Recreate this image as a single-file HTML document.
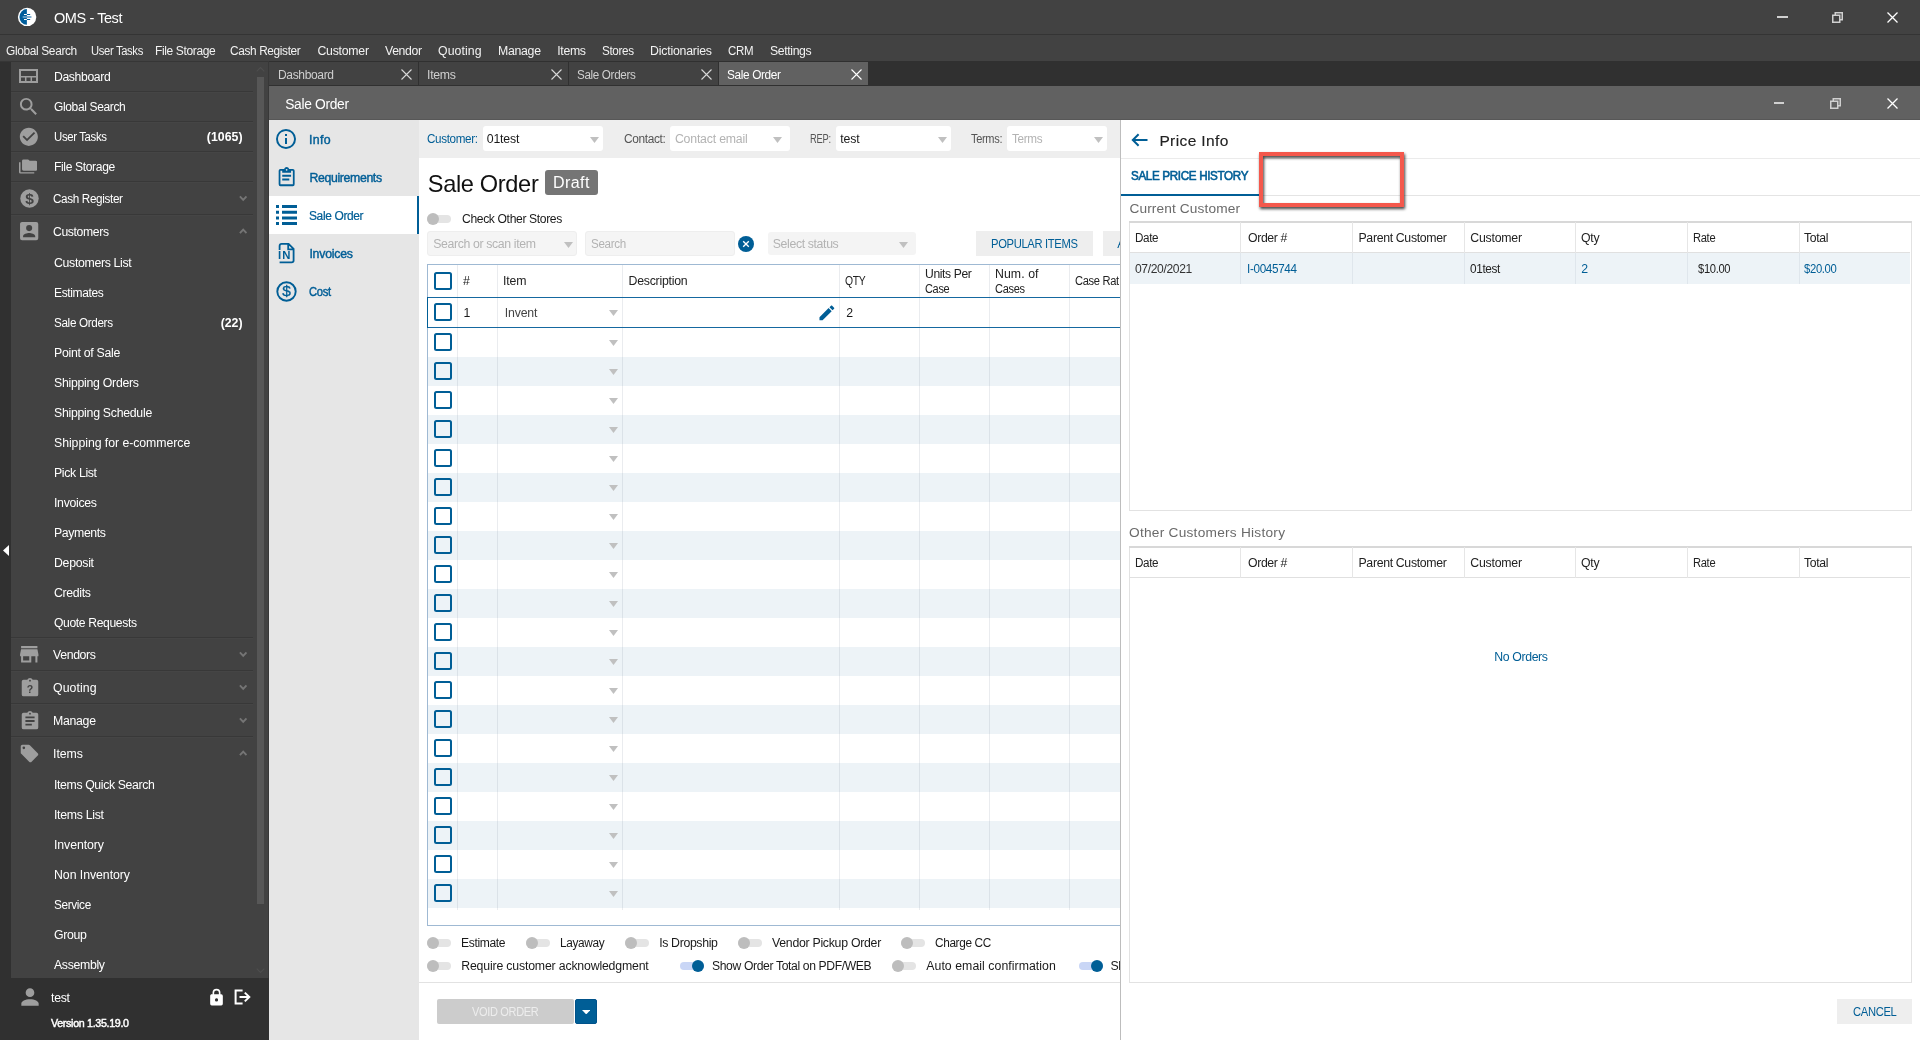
<!DOCTYPE html>
<html lang="en"><head><meta charset="utf-8"><title>OMS - Test</title>
<style>
html,body{margin:0;padding:0;background:#fff;}
body{width:1920px;height:1040px;overflow:hidden;font-family:"Liberation Sans",sans-serif;}
#app{position:relative;width:1920px;height:1040px;overflow:hidden;background:#fff;will-change:transform;}
#app div,#app svg,#app span.t{position:absolute;}
#app div{box-sizing:border-box;}
span.t{white-space:nowrap;line-height:20px;transform-origin:0 50%;}
</style></head>
<body>
<div id="app">
<div style="left:0px;top:0px;width:1920px;height:35px;background:#424242;"></div>
<div style="left:0px;top:34px;width:1920px;height:1px;background:#343434;"></div>
<svg style="left:17px;top:7px;" width="20" height="20" viewBox="0 0 20 20"><circle cx="10.1" cy="9.9" r="9.2" fill="#fff"/>
<path d="M9.85 2.1A7.4 7.8 0 0 0 9.85 17.7Z" fill="#005E9C"/>
<path d="M9.85 6.95h3.3v1.1H9.85zM9.85 11.95h3.3v1.1H9.85z" fill="#005E9C"/>
<path d="M9.85 9.35h4.6v1.3H9.85z" fill="#3f86b8"/>
<path d="M7 6.95h2.85v1.1H7zM7 11.95h2.85v1.1H7z" fill="#fff"/>
<path d="M5.7 9.35h4.15v1.3H5.7z" fill="#8fbbd8"/></svg>
<span class="t" style="left:54px;top:8.00px;font-size:14.6px;color:#fff;letter-spacing:-0.438px;transform:scaleX(0.9960);">OMS - Test</span>
<div style="left:1777px;top:16px;width:10.5px;height:2px;background:#d0d0d0;"></div>
<svg style="left:1832px;top:11.5px;" width="11" height="11" viewBox="0 0 11 11"><path d="M0.75 3.25h7v7h-7z" fill="none" stroke="#d0d0d0" stroke-width="1.5"/><path d="M3.25 3V0.75h7v7H8" fill="none" stroke="#d0d0d0" stroke-width="1.5"/></svg>
<svg style="left:1887px;top:11.5px;" width="11" height="11" viewBox="0 0 11 11"><path d="M0.5 0.5L10.5 10.5M10.5 0.5L0.5 10.5" stroke="#fff" stroke-width="1.3" fill="none"/></svg>
<div style="left:0px;top:35px;width:1920px;height:26px;background:#424242;"></div>
<span class="t" style="left:6.25px;top:40.50px;font-size:12.3px;color:#f2f2f2;letter-spacing:-0.369px;transform:scaleX(0.9693);">Global Search</span>
<span class="t" style="left:90.5px;top:40.50px;font-size:12.3px;color:#f2f2f2;letter-spacing:-0.369px;transform:scaleX(0.9123);">User Tasks</span>
<span class="t" style="left:155.25px;top:40.50px;font-size:12.3px;color:#f2f2f2;letter-spacing:-0.369px;transform:scaleX(0.9758);">File Storage</span>
<span class="t" style="left:230.25px;top:40.50px;font-size:12.3px;color:#f2f2f2;letter-spacing:-0.369px;transform:scaleX(0.9627);">Cash Register</span>
<span class="t" style="left:317.5px;top:40.50px;font-size:12.3px;color:#f2f2f2;letter-spacing:-0.259px;">Customer</span>
<span class="t" style="left:385px;top:40.50px;font-size:12.3px;color:#f2f2f2;letter-spacing:-0.369px;transform:scaleX(0.9962);">Vendor</span>
<span class="t" style="left:438px;top:40.50px;font-size:12.3px;color:#f2f2f2;letter-spacing:0.070px;">Quoting</span>
<span class="t" style="left:498px;top:40.50px;font-size:12.3px;color:#f2f2f2;letter-spacing:-0.291px;">Manage</span>
<span class="t" style="left:557.2px;top:40.50px;font-size:12.3px;color:#f2f2f2;letter-spacing:-0.320px;">Items</span>
<span class="t" style="left:602px;top:40.50px;font-size:12.3px;color:#f2f2f2;letter-spacing:-0.369px;transform:scaleX(0.9495);">Stores</span>
<span class="t" style="left:650.1px;top:40.50px;font-size:12.3px;color:#f2f2f2;letter-spacing:-0.214px;">Dictionaries</span>
<span class="t" style="left:728.1px;top:40.50px;font-size:12.3px;color:#f2f2f2;letter-spacing:-0.369px;transform:scaleX(0.9348);">CRM</span>
<span class="t" style="left:770px;top:40.50px;font-size:12.3px;color:#f2f2f2;letter-spacing:-0.369px;transform:scaleX(0.9963);">Settings</span>
<div style="left:0px;top:61px;width:1920px;height:25px;background:#303030;"></div>
<div style="left:269px;top:62px;width:149px;height:23px;background:#424242;"></div>
<span class="t" style="left:277.5px;top:64.50px;font-size:12.3px;color:#cfcfcf;letter-spacing:-0.369px;transform:scaleX(0.9787);">Dashboard</span>
<svg style="left:401px;top:69px;" width="11" height="11" viewBox="0 0 11 11"><path d="M0.5 0.5L10.5 10.5M10.5 0.5L0.5 10.5" stroke="#d8d8d8" stroke-width="1.1" fill="none"/></svg>
<div style="left:419px;top:62px;width:149px;height:23px;background:#424242;"></div>
<span class="t" style="left:427.1px;top:64.50px;font-size:12.3px;color:#cfcfcf;letter-spacing:-0.320px;">Items</span>
<svg style="left:551px;top:69px;" width="11" height="11" viewBox="0 0 11 11"><path d="M0.5 0.5L10.5 10.5M10.5 0.5L0.5 10.5" stroke="#d8d8d8" stroke-width="1.1" fill="none"/></svg>
<div style="left:569px;top:62px;width:149px;height:23px;background:#424242;"></div>
<span class="t" style="left:577px;top:64.50px;font-size:12.3px;color:#cfcfcf;letter-spacing:-0.369px;transform:scaleX(0.9494);">Sale Orders</span>
<svg style="left:701px;top:69px;" width="11" height="11" viewBox="0 0 11 11"><path d="M0.5 0.5L10.5 10.5M10.5 0.5L0.5 10.5" stroke="#d8d8d8" stroke-width="1.1" fill="none"/></svg>
<div style="left:719px;top:62px;width:149px;height:23px;background:#616161;"></div>
<span class="t" style="left:727px;top:64.50px;font-size:12.3px;color:#fff;letter-spacing:-0.369px;transform:scaleX(0.9617);">Sale Order</span>
<svg style="left:851px;top:69px;" width="11" height="11" viewBox="0 0 11 11"><path d="M0.5 0.5L10.5 10.5M10.5 0.5L0.5 10.5" stroke="#fff" stroke-width="1.1" fill="none"/></svg>
<div style="left:0px;top:61px;width:11px;height:979px;background:#303030;"></div>
<div style="left:11px;top:61px;width:258px;height:917px;background:#424242;"></div>
<div style="left:0px;top:978px;width:269px;height:62px;background:#303030;"></div>
<div style="left:0px;top:61px;width:269px;height:1px;background:#363636;"></div>
<div style="left:268px;top:61px;width:1px;height:917px;background:#383838;"></div>
<svg style="left:3px;top:545px;" width="6" height="11" viewBox="0 0 6 11"><path d="M6 0V11L0 5.5Z" fill="#fff"/></svg>
<div style="left:257px;top:77px;width:7px;height:827px;background:#575757;"></div>
<svg style="left:256px;top:66px;" width="9" height="6" viewBox="0 0 9 6"><path d="M0.7 5.3L4.5 1.5L8.3 5.3" stroke="#4e4e4e" stroke-width="1.2" fill="none"/></svg>
<svg style="left:256px;top:968px;" width="9" height="6" viewBox="0 0 9 6"><path d="M0.7 0.7L4.5 4.5L8.3 0.7" stroke="#4e4e4e" stroke-width="1.2" fill="none"/></svg>
<span class="t" style="left:54px;top:66.50px;font-size:12.3px;color:#fff;letter-spacing:-0.369px;transform:scaleX(0.9918);">Dashboard</span>
<span class="t" style="left:54px;top:96.50px;font-size:12.3px;color:#fff;letter-spacing:-0.369px;transform:scaleX(0.9761);">Global Search</span>
<span class="t" style="left:54px;top:126.50px;font-size:12.3px;color:#fff;letter-spacing:-0.369px;transform:scaleX(0.9254);">User Tasks</span>
<span class="t" style="left:54px;top:156.50px;font-size:12.3px;color:#fff;letter-spacing:-0.369px;transform:scaleX(0.9839);">File Storage</span>
<div style="left:11px;top:91px;width:242px;height:1px;background:#383838;"></div>
<div style="left:11px;top:92px;width:242px;height:1px;background:#454545;"></div>
<div style="left:11px;top:121px;width:242px;height:1px;background:#383838;"></div>
<div style="left:11px;top:122px;width:242px;height:1px;background:#454545;"></div>
<div style="left:11px;top:151px;width:242px;height:1px;background:#383838;"></div>
<div style="left:11px;top:152px;width:242px;height:1px;background:#454545;"></div>
<div style="left:11px;top:181px;width:242px;height:1px;background:#383838;"></div>
<div style="left:11px;top:182px;width:242px;height:1px;background:#454545;"></div>
<div style="left:11px;top:214px;width:242px;height:1px;background:#383838;"></div>
<div style="left:11px;top:215px;width:242px;height:1px;background:#454545;"></div>
<div style="left:11px;top:637px;width:242px;height:1px;background:#383838;"></div>
<div style="left:11px;top:638px;width:242px;height:1px;background:#454545;"></div>
<div style="left:11px;top:670px;width:242px;height:1px;background:#383838;"></div>
<div style="left:11px;top:671px;width:242px;height:1px;background:#454545;"></div>
<div style="left:11px;top:703px;width:242px;height:1px;background:#383838;"></div>
<div style="left:11px;top:704px;width:242px;height:1px;background:#454545;"></div>
<div style="left:11px;top:736px;width:242px;height:1px;background:#383838;"></div>
<div style="left:11px;top:737px;width:242px;height:1px;background:#454545;"></div>
<svg style="left:18.8px;top:69.2px;" width="19" height="14" viewBox="0 0 19 14"><path d="M1 1h17v12H1z" fill="none" stroke="#9e9e9e" stroke-width="2"/><path d="M1 7.8h17M6.7 7.8V13M12.3 7.8V13" fill="none" stroke="#9e9e9e" stroke-width="1.5"/></svg>
<svg style="left:16.7px;top:94.6px;" width="23.3" height="23.3" viewBox="0 0 24 24"><path fill="#9e9e9e" d="M9.5,3A6.5,6.5 0 0,1 16,9.5C16,11.11 15.41,12.59 14.44,13.73L14.71,14H15.5L20.5,19L19,20.5L14,15.5V14.71L13.73,14.44C12.59,15.41 11.11,16 9.5,16A6.5,6.5 0 0,1 3,9.5A6.5,6.5 0 0,1 9.5,3M9.5,5C7,5 5,7 5,9.5C5,12 7,14 9.5,14C12,14 14,12 14,9.5C14,7 12,5 9.5,5Z"/></svg>
<svg style="left:17.6px;top:125.9px;" width="21.7" height="21.7" viewBox="0 0 24 24"><path fill="#9e9e9e" d="M12 2C6.5 2 2 6.5 2 12S6.5 22 12 22 22 17.5 22 12 17.5 2 12 2M10 17L5 12L6.41 10.59L10 14.17L17.59 6.58L19 8L10 17Z"/></svg>
<svg style="left:19.2px;top:158.2px;" width="18.3" height="17" viewBox="0 0 24 24" preserveAspectRatio="none"><path fill="#9e9e9e" d="M22,4H14L12,2H6A2,2 0 0,0 4,4V16A2,2 0 0,0 6,18H22A2,2 0 0,0 24,16V6A2,2 0 0,0 22,4M2,6H0V11H0V20A2,2 0 0,0 2,22H20V20H2V6Z"/></svg>
<span class="t" style="left:53px;top:188.50px;font-size:12.3px;color:#fff;letter-spacing:-0.369px;transform:scaleX(0.9525);">Cash Register</span>
<svg style="left:238.6px;top:195.1px;" width="8.4" height="6.5" viewBox="0 0 8.4 6.5"><path d="M0.9 1.4L4.2 4.8L7.5 1.4" stroke="#757575" stroke-width="1.9" fill="none"/></svg>
<span class="t" style="left:53px;top:221.50px;font-size:12.3px;color:#fff;letter-spacing:-0.369px;transform:scaleX(0.9911);">Customers</span>
<svg style="left:238.6px;top:228.1px;" width="8.4" height="6.5" viewBox="0 0 8.4 6.5"><path d="M0.9 5.1L4.2 1.7L7.5 5.1" stroke="#757575" stroke-width="1.9" fill="none"/></svg>
<span class="t" style="left:53px;top:644.50px;font-size:12.3px;color:#fff;letter-spacing:-0.354px;">Vendors</span>
<svg style="left:238.6px;top:651.1px;" width="8.4" height="6.5" viewBox="0 0 8.4 6.5"><path d="M0.9 1.4L4.2 4.8L7.5 1.4" stroke="#757575" stroke-width="1.9" fill="none"/></svg>
<span class="t" style="left:53px;top:677.50px;font-size:12.3px;color:#fff;letter-spacing:0.070px;">Quoting</span>
<svg style="left:238.6px;top:684.1px;" width="8.4" height="6.5" viewBox="0 0 8.4 6.5"><path d="M0.9 1.4L4.2 4.8L7.5 1.4" stroke="#757575" stroke-width="1.9" fill="none"/></svg>
<span class="t" style="left:53px;top:710.50px;font-size:12.3px;color:#fff;letter-spacing:-0.291px;">Manage</span>
<svg style="left:238.6px;top:717.1px;" width="8.4" height="6.5" viewBox="0 0 8.4 6.5"><path d="M0.9 1.4L4.2 4.8L7.5 1.4" stroke="#757575" stroke-width="1.9" fill="none"/></svg>
<span class="t" style="left:53px;top:743.50px;font-size:12.3px;color:#fff;letter-spacing:-0.020px;">Items</span>
<svg style="left:238.6px;top:750.1px;" width="8.4" height="6.5" viewBox="0 0 8.4 6.5"><path d="M0.9 5.1L4.2 1.7L7.5 5.1" stroke="#757575" stroke-width="1.9" fill="none"/></svg>
<svg style="left:20px;top:189px;" width="19" height="19" viewBox="0 0 19 19"><circle cx="9.5" cy="9.5" r="9.2" fill="#9e9e9e"/><text x="9.5" y="15.1" text-anchor="middle" font-family="Liberation Sans,sans-serif" font-size="15.5" font-weight="700" fill="#424242">$</text></svg>
<svg style="left:17.2px;top:219.1px;" width="24.3" height="24.3" viewBox="0 0 24 24"><path fill="#9e9e9e" d="M6,17C6,15 10,13.9 12,13.9C14,13.9 18,15 18,17V18H6M15,9A3,3 0 0,1 12,12A3,3 0 0,1 9,9A3,3 0 0,1 12,6A3,3 0 0,1 15,9M3,5V19A2,2 0 0,0 5,21H19A2,2 0 0,0 21,19V5A2,2 0 0,0 19,3H5C3.89,3 3,3.9 3,5Z"/></svg>
<svg style="left:17.4px;top:641.8px;" width="24.5" height="24.5" viewBox="0 0 24 24"><path fill="#9e9e9e" d="M12,18H6V14H12M21,14V12L20,7H4L3,12V14H4V20H14V14H18V20H20V14M20,4H4V6H20V4Z"/></svg>
<svg style="left:18.6px;top:676.5px;" width="22" height="22" viewBox="0 0 24 24"><path fill="#9e9e9e" d="M12,3A1,1 0 0,1 13,4A1,1 0 0,1 12,5A1,1 0 0,1 11,4A1,1 0 0,1 12,3M19,3H14.82C14.4,1.84 13.3,1 12,1C10.7,1 9.6,1.84 9.18,3H5A2,2 0 0,0 3,5V19A2,2 0 0,0 5,21H19A2,2 0 0,0 21,19V5A2,2 0 0,0 19,3Z"/><text x="12" y="17" text-anchor="middle" font-family="Liberation Sans,sans-serif" font-size="11.5" font-weight="700" fill="#424242">?</text></svg>
<svg style="left:18.6px;top:709.5px;" width="22" height="22" viewBox="0 0 24 24"><path fill="#9e9e9e" d="M17,9H7V7H17M17,13H7V11H17M14,17H7V15H14M12,3A1,1 0 0,1 13,4A1,1 0 0,1 12,5A1,1 0 0,1 11,4A1,1 0 0,1 12,3M19,3H14.82C14.4,1.84 13.3,1 12,1C10.7,1 9.6,1.84 9.18,3H5A2,2 0 0,0 3,5V19A2,2 0 0,0 5,21H19A2,2 0 0,0 21,19V5A2,2 0 0,0 19,3Z"/></svg>
<svg style="left:19px;top:743px;" width="21" height="21" viewBox="0 0 24 24"><path fill="#9e9e9e" d="M5.5,7A1.5,1.5 0 0,1 4,5.5A1.5,1.5 0 0,1 5.5,4A1.5,1.5 0 0,1 7,5.5A1.5,1.5 0 0,1 5.5,7M21.41,11.58L12.41,2.58C12.05,2.22 11.55,2 11,2H4C2.89,2 2,2.89 2,4V11C2,11.55 2.22,12.05 2.59,12.41L11.58,21.41C11.95,21.77 12.45,22 13,22C13.55,22 14.05,21.77 14.41,21.41L21.41,14.41C21.78,14.05 22,13.55 22,13C22,12.44 21.77,11.94 21.41,11.58Z"/></svg>
<span class="t" style="left:54px;top:252.50px;font-size:12.3px;color:#fff;letter-spacing:-0.328px;">Customers List</span>
<span class="t" style="left:54px;top:282.50px;font-size:12.3px;color:#fff;letter-spacing:-0.369px;transform:scaleX(0.9746);">Estimates</span>
<span class="t" style="left:54px;top:312.50px;font-size:12.3px;color:#fff;letter-spacing:-0.369px;transform:scaleX(0.9526);">Sale Orders</span>
<span class="t" style="left:54px;top:342.50px;font-size:12.3px;color:#fff;letter-spacing:-0.290px;">Point of Sale</span>
<span class="t" style="left:54px;top:372.50px;font-size:12.3px;color:#fff;letter-spacing:-0.276px;">Shipping Orders</span>
<span class="t" style="left:54px;top:402.50px;font-size:12.3px;color:#fff;letter-spacing:-0.270px;">Shipping Schedule</span>
<span class="t" style="left:54px;top:432.50px;font-size:12.3px;color:#fff;letter-spacing:-0.051px;">Shipping for e-commerce</span>
<span class="t" style="left:54px;top:462.50px;font-size:12.3px;color:#fff;letter-spacing:-0.350px;">Pick List</span>
<span class="t" style="left:54px;top:492.50px;font-size:12.3px;color:#fff;letter-spacing:-0.304px;">Invoices</span>
<span class="t" style="left:54px;top:522.50px;font-size:12.3px;color:#fff;letter-spacing:-0.369px;transform:scaleX(0.9980);">Payments</span>
<span class="t" style="left:54px;top:552.50px;font-size:12.3px;color:#fff;letter-spacing:-0.284px;">Deposit</span>
<span class="t" style="left:54px;top:582.50px;font-size:12.3px;color:#fff;letter-spacing:-0.326px;">Credits</span>
<span class="t" style="left:54px;top:612.50px;font-size:12.3px;color:#fff;letter-spacing:-0.369px;transform:scaleX(0.9872);">Quote Requests</span>
<span class="t" style="left:54px;top:774.50px;font-size:12.3px;color:#fff;letter-spacing:-0.369px;transform:scaleX(0.9973);">Items Quick Search</span>
<span class="t" style="left:54px;top:804.50px;font-size:12.3px;color:#fff;letter-spacing:-0.292px;">Items List</span>
<span class="t" style="left:54px;top:834.50px;font-size:12.3px;color:#fff;letter-spacing:-0.074px;">Inventory</span>
<span class="t" style="left:54px;top:864.50px;font-size:12.3px;color:#fff;letter-spacing:-0.047px;">Non Inventory</span>
<span class="t" style="left:54px;top:894.50px;font-size:12.3px;color:#fff;letter-spacing:-0.369px;transform:scaleX(0.9600);">Service</span>
<span class="t" style="left:54px;top:924.50px;font-size:12.3px;color:#fff;letter-spacing:-0.359px;">Group</span>
<span class="t" style="left:54px;top:954.50px;font-size:12.3px;color:#fff;letter-spacing:-0.330px;">Assembly</span>
<span class="t" style="left:206.75px;top:126.50px;font-size:12.3px;color:#fff;font-weight:700;letter-spacing:0.041px;">(1065)</span>
<span class="t" style="left:220.75px;top:312.50px;font-size:12.3px;color:#fff;font-weight:700;letter-spacing:-0.042px;">(22)</span>
<svg style="left:17px;top:984px;" width="26" height="26" viewBox="0 0 24 24"><path fill="#9e9e9e" d="M12,4A4,4 0 0,1 16,8A4,4 0 0,1 12,12A4,4 0 0,1 8,8A4,4 0 0,1 12,4M12,14C16.42,14 20,15.79 20,18V20H4V18C4,15.79 7.58,14 12,14Z"/></svg>
<span class="t" style="left:51px;top:988.40px;font-size:12.3px;color:#fff;letter-spacing:-0.276px;">test</span>
<span class="t" style="left:51px;top:1013.30px;font-size:10.8px;color:#fff;letter-spacing:-0.324px;transform:scaleX(0.9891);-webkit-text-stroke:0.45px #fff;">Version 1.35.19.0</span>
<svg style="left:206.5px;top:988px;" width="19" height="19" viewBox="0 0 24 24"><path fill="#fff" d="M12,17A2,2 0 0,0 14,15C14,13.89 13.1,13 12,13A2,2 0 0,0 10,15A2,2 0 0,0 12,17M18,8A2,2 0 0,1 20,10V20A2,2 0 0,1 18,22H6A2,2 0 0,1 4,20V10C4,8.89 4.9,8 6,8H7V6A5,5 0 0,1 12,1A5,5 0 0,1 17,6V8H18M12,3A3,3 0 0,0 9,6V8H15V6A3,3 0 0,0 12,3Z"/></svg>
<svg style="left:233.5px;top:989px;" width="17" height="16" viewBox="0 0 17 16"><path d="M8.6 1.6H1.6V14.4H8.6" stroke="#fff" stroke-width="2" fill="none"/><path d="M5.5 8H15M10.8 3.6L15.3 8L10.8 12.4" stroke="#fff" stroke-width="2" fill="none"/></svg>
<div style="left:269px;top:86px;width:1651px;height:34px;background:#616161;"></div>
<div style="left:269px;top:119px;width:1651px;height:1px;background:#575757;"></div>
<span class="t" style="left:285.25px;top:94.80px;font-size:13.8px;color:#fff;letter-spacing:-0.330px;">Sale Order</span>
<div style="left:1773.5px;top:102px;width:10.5px;height:2px;background:#d0d0d0;"></div>
<svg style="left:1830px;top:97.5px;" width="11" height="11" viewBox="0 0 11 11"><path d="M0.75 3.25h7v7h-7z" fill="none" stroke="#d0d0d0" stroke-width="1.5"/><path d="M3.25 3V0.75h7v7H8" fill="none" stroke="#d0d0d0" stroke-width="1.5"/></svg>
<svg style="left:1887px;top:97.5px;" width="11" height="11" viewBox="0 0 11 11"><path d="M0.5 0.5L10.5 10.5M10.5 0.5L0.5 10.5" stroke="#fff" stroke-width="1.3" fill="none"/></svg>
<div style="left:269px;top:120px;width:150px;height:920px;background:#E6E6E6;"></div>
<div style="left:269px;top:196px;width:150px;height:38px;background:#fff;"></div>
<div style="left:417px;top:196px;width:2px;height:38px;background:#005E96;"></div>
<span class="t" style="left:309.4px;top:129.50px;font-size:12.3px;color:#005E96;letter-spacing:0.308px;transform:scaleX(1.0029);-webkit-text-stroke:0.42px #005E96;">Info</span>
<span class="t" style="left:309.4px;top:167.50px;font-size:12.3px;color:#005E96;letter-spacing:-0.351px;-webkit-text-stroke:0.42px #005E96;">Requirements</span>
<span class="t" style="left:309.4px;top:205.50px;font-size:12.3px;color:#005E96;letter-spacing:-0.369px;transform:scaleX(0.9724);-webkit-text-stroke:0.22px #005E96;">Sale Order</span>
<span class="t" style="left:309.4px;top:243.50px;font-size:12.3px;color:#005E96;letter-spacing:-0.218px;-webkit-text-stroke:0.42px #005E96;">Invoices</span>
<span class="t" style="left:309.4px;top:281.50px;font-size:12.3px;color:#005E96;letter-spacing:-0.369px;transform:scaleX(0.9136);-webkit-text-stroke:0.42px #005E96;">Cost</span>
<svg style="left:274px;top:127px;" width="24" height="24" viewBox="0 0 24 24"><path fill="#005E96" d="M11,9H13V7H11M12,20C7.59,20 4,16.41 4,12C4,7.59 7.59,4 12,4C16.41,4 20,7.59 20,12C20,16.41 16.41,20 12,20M12,2A10,10 0 0,0 2,12A10,10 0 0,0 12,22A10,10 0 0,0 22,12A10,10 0 0,0 12,2M11,17H13V11H11V17Z"/></svg>
<svg style="left:275.8px;top:166.3px;" width="21.3" height="23.2" viewBox="0 0 24 24" preserveAspectRatio="none"><path fill="#005E96" d="M19,3H14.82C14.4,1.84 13.3,1 12,1C10.7,1 9.6,1.84 9.18,3H5A2,2 0 0,0 3,5V19A2,2 0 0,0 5,21H19A2,2 0 0,0 21,19V5A2,2 0 0,0 19,3M12,3A1,1 0 0,1 13,4A1,1 0 0,1 12,5A1,1 0 0,1 11,4A1,1 0 0,1 12,3M7,7H17V5H19V19H5V5H7V7M17,11H7V9H17V11M15,15H7V13H15V15Z"/></svg>
<svg style="left:276px;top:205px;" width="21" height="20" viewBox="0 0 21 20"><path d="M0 0h3v3H0zM6 0h15v3H6zM0 5.7h3v3H0zM6 5.7h15v3H6zM0 11.4h3v3H0zM6 11.4h15v3H6zM0 17h3v3H0zM6 17h15v3H6z" fill="#005E96"/></svg>
<svg style="left:277px;top:242px;" width="18" height="22" viewBox="0 0 18 22"><path d="M2.6 7.9V3.9Q2.6 1.9 4.6 1.9H11.6L16.6 6.9V18.5Q16.6 20.4 14.6 20.4H2.6M11.2 2.1V7.3H16.6" fill="none" stroke="#005E96" stroke-width="1.8"/><text x="0.9" y="17.1" font-family="Liberation Sans,sans-serif" font-size="10.2" font-weight="700" letter-spacing="1.2" textLength="14" lengthAdjust="spacingAndGlyphs" fill="#005E96">IN</text></svg>
<svg style="left:276px;top:281px;" width="21" height="21" viewBox="0 0 21 21"><circle cx="10.5" cy="10.5" r="9.2" fill="none" stroke="#005E96" stroke-width="1.9"/><text x="10.5" y="15.4" text-anchor="middle" font-family="Liberation Sans,sans-serif" font-size="15.5" font-weight="400" stroke="#005E96" stroke-width="0.3" fill="#005E96">$</text></svg>
<div style="left:419px;top:120px;width:701px;height:38px;background:#EEEEEE;"></div>
<span class="t" style="left:427.4px;top:129.00px;font-size:12.3px;color:#005E96;letter-spacing:-0.369px;transform:scaleX(0.9485);">Customer:</span>
<div style="left:483px;top:126px;width:120px;height:25px;background:#fff;border-radius:3px;"></div>
<span class="t" style="left:486.8px;top:129.00px;font-size:12.3px;color:#1a1a1a;letter-spacing:-0.200px;">01test</span>
<svg style="left:589.9px;top:136.5px;" width="9" height="6" viewBox="0 0 9 6"><path d="M0 0H9L4.5 6Z" fill="#c0c0c0"/></svg>
<span class="t" style="left:623.5px;top:129.00px;font-size:12.3px;color:#555;letter-spacing:-0.369px;transform:scaleX(0.9673);">Contact:</span>
<div style="left:670px;top:126px;width:120px;height:25px;background:#fff;border-radius:3px;"></div>
<span class="t" style="left:674.9px;top:129.00px;font-size:12.3px;color:#b3b3b3;letter-spacing:-0.191px;">Contact email</span>
<svg style="left:773.1px;top:136.5px;" width="9" height="6" viewBox="0 0 9 6"><path d="M0 0H9L4.5 6Z" fill="#c0c0c0"/></svg>
<span class="t" style="left:810.25px;top:129.00px;font-size:12.3px;color:#555;letter-spacing:-0.369px;transform:scaleX(0.7610);">REP:</span>
<div style="left:836px;top:126px;width:115px;height:25px;background:#fff;border-radius:3px;"></div>
<span class="t" style="left:840.25px;top:129.00px;font-size:12.3px;color:#1a1a1a;letter-spacing:-0.109px;">test</span>
<svg style="left:938.1px;top:136.5px;" width="9" height="6" viewBox="0 0 9 6"><path d="M0 0H9L4.5 6Z" fill="#c0c0c0"/></svg>
<span class="t" style="left:971px;top:129.00px;font-size:12.3px;color:#555;letter-spacing:-0.369px;transform:scaleX(0.8988);">Terms:</span>
<div style="left:1007px;top:126px;width:100px;height:25px;background:#fff;border-radius:3px;"></div>
<span class="t" style="left:1012.2px;top:129.00px;font-size:12.3px;color:#b3b3b3;letter-spacing:-0.369px;transform:scaleX(0.9544);">Terms</span>
<svg style="left:1093.9px;top:136.5px;" width="9" height="6" viewBox="0 0 9 6"><path d="M0 0H9L4.5 6Z" fill="#c0c0c0"/></svg>
<span class="t" style="left:427.75px;top:173.50px;font-size:23.6px;color:#111;letter-spacing:-0.344px;">Sale Order</span>
<div style="left:545px;top:170px;width:53px;height:25px;background:#757575;border-radius:3px;"></div>
<span class="t" style="left:553.4px;top:173.40px;font-size:15.6px;color:#fff;letter-spacing:0.390px;transform:scaleX(1.0295);">Draft</span>
<div style="left:427px;top:214.5px;width:24px;height:8px;background:#e4e4e4;border-radius:4px;"></div>
<div style="left:427px;top:212.5px;width:12px;height:12px;background:#bdbdbd;border-radius:6px;"></div>
<span class="t" style="left:461.5px;top:208.50px;font-size:12.3px;color:#1a1a1a;letter-spacing:-0.369px;transform:scaleX(0.9861);">Check Other Stores</span>
<div style="left:427px;top:231px;width:150px;height:25px;background:#f5f5f5;border-radius:3px;border:1px solid #eeeeee;"></div>
<span class="t" style="left:433.2px;top:233.50px;font-size:12.3px;color:#b3b3b3;letter-spacing:-0.364px;">Search or scan item</span>
<svg style="left:563.5px;top:241.5px;" width="9" height="6" viewBox="0 0 9 6"><path d="M0 0H9L4.5 6Z" fill="#c0c0c0"/></svg>
<div style="left:585px;top:231px;width:150px;height:25px;background:#f5f5f5;border-radius:3px;border:1px solid #eeeeee;"></div>
<span class="t" style="left:590.9px;top:233.50px;font-size:12.3px;color:#b3b3b3;letter-spacing:-0.369px;transform:scaleX(0.9455);">Search</span>
<svg style="left:738px;top:235.8px;" width="16" height="16" viewBox="0 0 16 16"><circle cx="8" cy="8" r="8" fill="#005E96"/><path d="M5.2 5.2L10.8 10.8M10.8 5.2L5.2 10.8" stroke="#fff" stroke-width="1.35" fill="none"/></svg>
<div style="left:768px;top:232px;width:148px;height:23px;background:#f4f4f4;border-radius:3px;"></div>
<span class="t" style="left:772.75px;top:233.50px;font-size:12.3px;color:#b3b3b3;letter-spacing:-0.367px;">Select status</span>
<svg style="left:898.9px;top:241.5px;" width="9" height="6" viewBox="0 0 9 6"><path d="M0 0H9L4.5 6Z" fill="#c0c0c0"/></svg>
<div style="left:976px;top:231px;width:117px;height:25px;background:#eeeeee;"></div>
<span class="t" style="left:991.2px;top:233.50px;font-size:12.4px;color:#005E96;letter-spacing:-0.372px;transform:scaleX(0.9056);">POPULAR ITEMS</span>
<div style="left:1103px;top:231px;width:17px;height:25px;background:#eeeeee;"></div>
<span class="t" style="left:1117.3px;top:233.50px;font-size:12.4px;color:#005E96;">A</span>
<div style="left:427px;top:264px;width:694px;height:662px;background:#fff;border:1px solid #9fb9d3;border-right:none;"></div>
<div style="left:428px;top:356.5px;width:692px;height:29px;background:#edf3f7;"></div>
<div style="left:428px;top:414.5px;width:692px;height:29px;background:#edf3f7;"></div>
<div style="left:428px;top:472.5px;width:692px;height:29px;background:#edf3f7;"></div>
<div style="left:428px;top:530.5px;width:692px;height:29px;background:#edf3f7;"></div>
<div style="left:428px;top:588.5px;width:692px;height:29px;background:#edf3f7;"></div>
<div style="left:428px;top:646.5px;width:692px;height:29px;background:#edf3f7;"></div>
<div style="left:428px;top:704.5px;width:692px;height:29px;background:#edf3f7;"></div>
<div style="left:428px;top:762.5px;width:692px;height:29px;background:#edf3f7;"></div>
<div style="left:428px;top:820.5px;width:692px;height:29px;background:#edf3f7;"></div>
<div style="left:428px;top:878.5px;width:692px;height:29px;background:#edf3f7;"></div>
<div style="left:457px;top:265px;width:1px;height:645px;background:rgba(130,145,160,0.17);"></div>
<div style="left:496.5px;top:265px;width:1px;height:645px;background:rgba(130,145,160,0.17);"></div>
<div style="left:622px;top:265px;width:1px;height:645px;background:rgba(130,145,160,0.17);"></div>
<div style="left:839px;top:265px;width:1px;height:645px;background:rgba(130,145,160,0.17);"></div>
<div style="left:919px;top:265px;width:1px;height:645px;background:rgba(130,145,160,0.17);"></div>
<div style="left:989px;top:265px;width:1px;height:645px;background:rgba(130,145,160,0.17);"></div>
<div style="left:1069px;top:265px;width:1px;height:645px;background:rgba(130,145,160,0.17);"></div>
<div style="left:428px;top:297px;width:692px;height:1.2px;background:#1568a0;"></div>
<div style="left:428px;top:326.8px;width:692px;height:1.2px;background:#1568a0;"></div>
<div style="left:427px;top:297px;width:1px;height:31px;background:#005E96;"></div>
<div style="left:434px;top:272px;width:18px;height:18px;background:transparent;border:2px solid #005E96;border-radius:2.5px;"></div>
<div style="left:434px;top:303px;width:18px;height:18px;background:transparent;border:2px solid #005E96;border-radius:2.5px;"></div>
<div style="left:434px;top:333px;width:18px;height:18px;background:transparent;border:2px solid #005E96;border-radius:2.5px;"></div>
<svg style="left:608.5px;top:340.0px;" width="9" height="6" viewBox="0 0 9 6"><path d="M0 0H9L4.5 6Z" fill="#c0c0c0"/></svg>
<div style="left:434px;top:362px;width:18px;height:18px;background:transparent;border:2px solid #005E96;border-radius:2.5px;"></div>
<svg style="left:608.5px;top:369.0px;" width="9" height="6" viewBox="0 0 9 6"><path d="M0 0H9L4.5 6Z" fill="#c0c0c0"/></svg>
<div style="left:434px;top:391px;width:18px;height:18px;background:transparent;border:2px solid #005E96;border-radius:2.5px;"></div>
<svg style="left:608.5px;top:398.0px;" width="9" height="6" viewBox="0 0 9 6"><path d="M0 0H9L4.5 6Z" fill="#c0c0c0"/></svg>
<div style="left:434px;top:420px;width:18px;height:18px;background:transparent;border:2px solid #005E96;border-radius:2.5px;"></div>
<svg style="left:608.5px;top:427.0px;" width="9" height="6" viewBox="0 0 9 6"><path d="M0 0H9L4.5 6Z" fill="#c0c0c0"/></svg>
<div style="left:434px;top:449px;width:18px;height:18px;background:transparent;border:2px solid #005E96;border-radius:2.5px;"></div>
<svg style="left:608.5px;top:456.0px;" width="9" height="6" viewBox="0 0 9 6"><path d="M0 0H9L4.5 6Z" fill="#c0c0c0"/></svg>
<div style="left:434px;top:478px;width:18px;height:18px;background:transparent;border:2px solid #005E96;border-radius:2.5px;"></div>
<svg style="left:608.5px;top:485.0px;" width="9" height="6" viewBox="0 0 9 6"><path d="M0 0H9L4.5 6Z" fill="#c0c0c0"/></svg>
<div style="left:434px;top:507px;width:18px;height:18px;background:transparent;border:2px solid #005E96;border-radius:2.5px;"></div>
<svg style="left:608.5px;top:514.0px;" width="9" height="6" viewBox="0 0 9 6"><path d="M0 0H9L4.5 6Z" fill="#c0c0c0"/></svg>
<div style="left:434px;top:536px;width:18px;height:18px;background:transparent;border:2px solid #005E96;border-radius:2.5px;"></div>
<svg style="left:608.5px;top:543.0px;" width="9" height="6" viewBox="0 0 9 6"><path d="M0 0H9L4.5 6Z" fill="#c0c0c0"/></svg>
<div style="left:434px;top:565px;width:18px;height:18px;background:transparent;border:2px solid #005E96;border-radius:2.5px;"></div>
<svg style="left:608.5px;top:572.0px;" width="9" height="6" viewBox="0 0 9 6"><path d="M0 0H9L4.5 6Z" fill="#c0c0c0"/></svg>
<div style="left:434px;top:594px;width:18px;height:18px;background:transparent;border:2px solid #005E96;border-radius:2.5px;"></div>
<svg style="left:608.5px;top:601.0px;" width="9" height="6" viewBox="0 0 9 6"><path d="M0 0H9L4.5 6Z" fill="#c0c0c0"/></svg>
<div style="left:434px;top:623px;width:18px;height:18px;background:transparent;border:2px solid #005E96;border-radius:2.5px;"></div>
<svg style="left:608.5px;top:630.0px;" width="9" height="6" viewBox="0 0 9 6"><path d="M0 0H9L4.5 6Z" fill="#c0c0c0"/></svg>
<div style="left:434px;top:652px;width:18px;height:18px;background:transparent;border:2px solid #005E96;border-radius:2.5px;"></div>
<svg style="left:608.5px;top:659.0px;" width="9" height="6" viewBox="0 0 9 6"><path d="M0 0H9L4.5 6Z" fill="#c0c0c0"/></svg>
<div style="left:434px;top:681px;width:18px;height:18px;background:transparent;border:2px solid #005E96;border-radius:2.5px;"></div>
<svg style="left:608.5px;top:688.0px;" width="9" height="6" viewBox="0 0 9 6"><path d="M0 0H9L4.5 6Z" fill="#c0c0c0"/></svg>
<div style="left:434px;top:710px;width:18px;height:18px;background:transparent;border:2px solid #005E96;border-radius:2.5px;"></div>
<svg style="left:608.5px;top:717.0px;" width="9" height="6" viewBox="0 0 9 6"><path d="M0 0H9L4.5 6Z" fill="#c0c0c0"/></svg>
<div style="left:434px;top:739px;width:18px;height:18px;background:transparent;border:2px solid #005E96;border-radius:2.5px;"></div>
<svg style="left:608.5px;top:746.0px;" width="9" height="6" viewBox="0 0 9 6"><path d="M0 0H9L4.5 6Z" fill="#c0c0c0"/></svg>
<div style="left:434px;top:768px;width:18px;height:18px;background:transparent;border:2px solid #005E96;border-radius:2.5px;"></div>
<svg style="left:608.5px;top:775.0px;" width="9" height="6" viewBox="0 0 9 6"><path d="M0 0H9L4.5 6Z" fill="#c0c0c0"/></svg>
<div style="left:434px;top:797px;width:18px;height:18px;background:transparent;border:2px solid #005E96;border-radius:2.5px;"></div>
<svg style="left:608.5px;top:804.0px;" width="9" height="6" viewBox="0 0 9 6"><path d="M0 0H9L4.5 6Z" fill="#c0c0c0"/></svg>
<div style="left:434px;top:826px;width:18px;height:18px;background:transparent;border:2px solid #005E96;border-radius:2.5px;"></div>
<svg style="left:608.5px;top:833.0px;" width="9" height="6" viewBox="0 0 9 6"><path d="M0 0H9L4.5 6Z" fill="#c0c0c0"/></svg>
<div style="left:434px;top:855px;width:18px;height:18px;background:transparent;border:2px solid #005E96;border-radius:2.5px;"></div>
<svg style="left:608.5px;top:862.0px;" width="9" height="6" viewBox="0 0 9 6"><path d="M0 0H9L4.5 6Z" fill="#c0c0c0"/></svg>
<div style="left:434px;top:884px;width:18px;height:18px;background:transparent;border:2px solid #005E96;border-radius:2.5px;"></div>
<svg style="left:608.5px;top:891.0px;" width="9" height="6" viewBox="0 0 9 6"><path d="M0 0H9L4.5 6Z" fill="#c0c0c0"/></svg>
<svg style="left:608.5px;top:310.0px;" width="9" height="6" viewBox="0 0 9 6"><path d="M0 0H9L4.5 6Z" fill="#c0c0c0"/></svg>
<span class="t" style="left:463.1px;top:271.00px;font-size:12.3px;color:#222;">#</span>
<span class="t" style="left:503px;top:271.00px;font-size:12.3px;color:#222;letter-spacing:-0.141px;">Item</span>
<span class="t" style="left:628.5px;top:271.00px;font-size:12.3px;color:#222;letter-spacing:-0.242px;">Description</span>
<span class="t" style="left:845px;top:271.00px;font-size:12.3px;color:#222;letter-spacing:-0.369px;transform:scaleX(0.8434);">QTY</span>
<span class="t" style="left:925.3px;top:263.50px;font-size:12.3px;color:#222;letter-spacing:-0.369px;transform:scaleX(0.9848);">Units Per</span>
<span class="t" style="left:925.3px;top:278.50px;font-size:12.3px;color:#222;letter-spacing:-0.369px;transform:scaleX(0.8945);">Case</span>
<span class="t" style="left:995px;top:263.50px;font-size:12.3px;color:#222;letter-spacing:0.073px;">Num. of</span>
<span class="t" style="left:995px;top:278.50px;font-size:12.3px;color:#222;letter-spacing:-0.369px;transform:scaleX(0.8987);">Cases</span>
<div style="left:1069px;top:265px;width:50.3px;height:32px;overflow:hidden;">
<span class="t" style="left:6px;top:6.00px;font-size:12.3px;color:#222;letter-spacing:-0.369px;transform:scaleX(0.9065);">Case Rate</span>
</div>
<span class="t" style="left:463.5px;top:302.60px;font-size:12.3px;color:#1a1a1a;">1</span>
<span class="t" style="left:504.75px;top:302.60px;font-size:12.3px;color:#444;letter-spacing:-0.170px;">Invent</span>
<span class="t" style="left:846.2px;top:303.00px;font-size:12.3px;color:#1a1a1a;">2</span>
<svg style="left:816.6px;top:302.8px;" width="19.8" height="19.8" viewBox="0 0 24 24"><path fill="#005E96" d="M20.71,7.04C21.1,6.65 21.1,6 20.71,5.63L18.37,3.29C18,2.9 17.35,2.9 16.96,3.29L15.12,5.12L18.87,8.87M3,17.25V21H6.75L17.81,9.93L14.06,6.18L3,17.25Z"/></svg>
<div style="left:427px;top:938.5px;width:24px;height:8px;background:#e4e4e4;border-radius:4px;"></div>
<div style="left:427px;top:936.5px;width:12px;height:12px;background:#bdbdbd;border-radius:6px;"></div>
<span class="t" style="left:461.25px;top:932.50px;font-size:12.3px;color:#1a1a1a;letter-spacing:-0.369px;transform:scaleX(0.9843);">Estimate</span>
<div style="left:526px;top:938.5px;width:24px;height:8px;background:#e4e4e4;border-radius:4px;"></div>
<div style="left:526px;top:936.5px;width:12px;height:12px;background:#bdbdbd;border-radius:6px;"></div>
<span class="t" style="left:560.4px;top:932.50px;font-size:12.3px;color:#1a1a1a;letter-spacing:-0.369px;transform:scaleX(0.9626);">Layaway</span>
<div style="left:625px;top:938.5px;width:24px;height:8px;background:#e4e4e4;border-radius:4px;"></div>
<div style="left:625px;top:936.5px;width:12px;height:12px;background:#bdbdbd;border-radius:6px;"></div>
<span class="t" style="left:659.2px;top:932.50px;font-size:12.3px;color:#1a1a1a;letter-spacing:-0.350px;">Is Dropship</span>
<div style="left:738px;top:938.5px;width:24px;height:8px;background:#e4e4e4;border-radius:4px;"></div>
<div style="left:738px;top:936.5px;width:12px;height:12px;background:#bdbdbd;border-radius:6px;"></div>
<span class="t" style="left:772px;top:932.50px;font-size:12.3px;color:#1a1a1a;letter-spacing:-0.273px;">Vendor Pickup Order</span>
<div style="left:901px;top:938.5px;width:24px;height:8px;background:#e4e4e4;border-radius:4px;"></div>
<div style="left:901px;top:936.5px;width:12px;height:12px;background:#bdbdbd;border-radius:6px;"></div>
<span class="t" style="left:935.4px;top:932.50px;font-size:12.3px;color:#1a1a1a;letter-spacing:-0.369px;transform:scaleX(0.9613);">Charge CC</span>
<div style="left:427px;top:961.5px;width:24px;height:8px;background:#e4e4e4;border-radius:4px;"></div>
<div style="left:427px;top:959.5px;width:12px;height:12px;background:#bdbdbd;border-radius:6px;"></div>
<span class="t" style="left:461.25px;top:955.50px;font-size:12.3px;color:#1a1a1a;letter-spacing:-0.175px;">Require customer acknowledgment</span>
<div style="left:680px;top:961.5px;width:24px;height:8px;background:#c9d6f6;border-radius:4px;"></div>
<div style="left:692px;top:959.5px;width:12px;height:12px;background:#005E96;border-radius:6px;"></div>
<span class="t" style="left:712px;top:955.50px;font-size:12.3px;color:#1a1a1a;letter-spacing:-0.369px;transform:scaleX(0.9875);">Show Order Total on PDF/WEB</span>
<div style="left:892px;top:961.5px;width:24px;height:8px;background:#e4e4e4;border-radius:4px;"></div>
<div style="left:892px;top:959.5px;width:12px;height:12px;background:#bdbdbd;border-radius:6px;"></div>
<span class="t" style="left:926.25px;top:955.50px;font-size:12.3px;color:#1a1a1a;letter-spacing:0.048px;">Auto email confirmation</span>
<div style="left:1078.5px;top:961.5px;width:24px;height:8px;background:#c9d6f6;border-radius:4px;"></div>
<div style="left:1090.5px;top:959.5px;width:12px;height:12px;background:#005E96;border-radius:6px;"></div>
<div style="left:1105px;top:955px;width:15px;height:22px;overflow:hidden;">
<span class="t" style="left:5.4px;top:0.50px;font-size:12.3px;color:#1a1a1a;letter-spacing:-0.4px;">Show</span>
</div>
<div style="left:419px;top:982px;width:701px;height:1px;background:#e2e2e2;"></div>
<div style="left:437px;top:999px;width:137px;height:25px;background:#cccccc;border-radius:2px;"></div>
<span class="t" style="left:472px;top:1001.50px;font-size:12.4px;color:#ededed;letter-spacing:-0.372px;transform:scaleX(0.8884);">VOID ORDER</span>
<div style="left:575px;top:999px;width:22px;height:25px;background:#005E96;border-radius:2px;border:1px solid #00528a;"></div>
<svg style="left:582px;top:1009.8px;" width="8.4" height="4.4" viewBox="0 0 8.4 4.4"><path d="M0 0H8.4L4.2 4.4Z" fill="#fff"/></svg>
<div style="left:1120px;top:120px;width:800px;height:920px;background:#fff;border-left:1.5px solid #bdbdbd;"></div>
<svg style="left:1130.5px;top:133px;" width="17" height="14" viewBox="0 0 17 14"><path d="M16.5 7H2.2M7.6 1.2L1.8 7L7.6 12.8" stroke="#005E96" stroke-width="2" fill="none"/></svg>
<span class="t" style="left:1159.4px;top:131.00px;font-size:15.5px;color:#222;letter-spacing:0.388px;-webkit-text-stroke:0.15px #222;">Price Info</span>
<div style="left:1121px;top:158px;width:799px;height:1px;background:#ebebeb;"></div>
<span class="t" style="left:1130.9px;top:166.00px;font-size:12.3px;color:#005E96;letter-spacing:-0.369px;transform:scaleX(0.9491);-webkit-text-stroke:0.6px #005E96;">SALE PRICE HISTORY</span>
<div style="left:1121px;top:195px;width:799px;height:1px;background:#e4e4e4;"></div>
<div style="left:1121px;top:194px;width:138px;height:2px;background:#005E96;"></div>
<span class="t" style="left:1129.4px;top:199.20px;font-size:13.7px;color:#6a6a6a;letter-spacing:0.121px;">Current Customer</span>
<div style="left:1129px;top:221px;width:783px;height:290px;background:#fff;border:1px solid #e2e2e2;"></div>
<div style="left:1129px;top:221px;width:783px;height:2px;background:#d8d8d8;"></div>
<div style="left:1130px;top:252px;width:780px;height:1px;background:#e0e0e0;"></div>
<div style="left:1240.0px;top:222px;width:1px;height:62px;background:#e6e6e6;"></div>
<div style="left:1352.0px;top:222px;width:1px;height:62px;background:#e6e6e6;"></div>
<div style="left:1463.5px;top:222px;width:1px;height:62px;background:#e6e6e6;"></div>
<div style="left:1575.0px;top:222px;width:1px;height:62px;background:#e6e6e6;"></div>
<div style="left:1686.5px;top:222px;width:1px;height:62px;background:#e6e6e6;"></div>
<div style="left:1798.5px;top:222px;width:1px;height:62px;background:#e6e6e6;"></div>
<span class="t" style="left:1135.4px;top:228.00px;font-size:12.3px;color:#222;letter-spacing:-0.369px;transform:scaleX(0.9487);">Date</span>
<span class="t" style="left:1247.5px;top:228.00px;font-size:12.3px;color:#222;letter-spacing:-0.369px;transform:scaleX(0.9977);">Order #</span>
<span class="t" style="left:1358.5px;top:228.00px;font-size:12.3px;color:#222;letter-spacing:-0.332px;">Parent Customer</span>
<span class="t" style="left:1470.3px;top:228.00px;font-size:12.3px;color:#222;letter-spacing:-0.230px;">Customer</span>
<span class="t" style="left:1580.9px;top:228.00px;font-size:12.3px;color:#222;letter-spacing:-0.170px;">Qty</span>
<span class="t" style="left:1693.2px;top:228.00px;font-size:12.3px;color:#222;letter-spacing:-0.369px;transform:scaleX(0.9085);">Rate</span>
<span class="t" style="left:1804.25px;top:228.00px;font-size:12.3px;color:#222;letter-spacing:-0.369px;transform:scaleX(0.9935);">Total</span>
<div style="left:1130px;top:253px;width:780px;height:31px;background:#edf3f7;"></div>
<div style="left:1240.0px;top:253px;width:1px;height:31px;background:#dfe6ec;"></div>
<div style="left:1352.0px;top:253px;width:1px;height:31px;background:#dfe6ec;"></div>
<div style="left:1463.5px;top:253px;width:1px;height:31px;background:#dfe6ec;"></div>
<div style="left:1575.0px;top:253px;width:1px;height:31px;background:#dfe6ec;"></div>
<div style="left:1686.5px;top:253px;width:1px;height:31px;background:#dfe6ec;"></div>
<div style="left:1798.5px;top:253px;width:1px;height:31px;background:#dfe6ec;"></div>
<span class="t" style="left:1135px;top:258.80px;font-size:12.3px;color:#333;letter-spacing:-0.369px;transform:scaleX(0.9832);">07/20/2021</span>
<span class="t" style="left:1246.9px;top:258.80px;font-size:12.3px;color:#005E96;letter-spacing:-0.369px;transform:scaleX(0.9535);">I-0045744</span>
<span class="t" style="left:1470.3px;top:258.80px;font-size:12.3px;color:#222;letter-spacing:-0.369px;transform:scaleX(0.9572);">01test</span>
<span class="t" style="left:1581.3px;top:258.80px;font-size:12.3px;color:#005E96;">2</span>
<span class="t" style="left:1698.3px;top:258.80px;font-size:12.3px;color:#222;letter-spacing:-0.369px;transform:scaleX(0.9083);">$10.00</span>
<span class="t" style="left:1804.25px;top:258.80px;font-size:12.3px;color:#005E96;letter-spacing:-0.369px;transform:scaleX(0.9181);">$20.00</span>
<span class="t" style="left:1129px;top:522.80px;font-size:13.7px;color:#6a6a6a;letter-spacing:0.245px;">Other Customers History</span>
<div style="left:1129px;top:546px;width:783px;height:437px;background:#fff;border:1px solid #e2e2e2;"></div>
<div style="left:1129px;top:546px;width:783px;height:2px;background:#d8d8d8;"></div>
<div style="left:1130px;top:577px;width:780px;height:1px;background:#e0e0e0;"></div>
<div style="left:1240.0px;top:547px;width:1px;height:31px;background:#e6e6e6;"></div>
<div style="left:1352.0px;top:547px;width:1px;height:31px;background:#e6e6e6;"></div>
<div style="left:1463.5px;top:547px;width:1px;height:31px;background:#e6e6e6;"></div>
<div style="left:1575.0px;top:547px;width:1px;height:31px;background:#e6e6e6;"></div>
<div style="left:1686.5px;top:547px;width:1px;height:31px;background:#e6e6e6;"></div>
<div style="left:1798.5px;top:547px;width:1px;height:31px;background:#e6e6e6;"></div>
<span class="t" style="left:1135.4px;top:553.00px;font-size:12.3px;color:#222;letter-spacing:-0.369px;transform:scaleX(0.9487);">Date</span>
<span class="t" style="left:1247.5px;top:553.00px;font-size:12.3px;color:#222;letter-spacing:-0.369px;transform:scaleX(0.9977);">Order #</span>
<span class="t" style="left:1358.5px;top:553.00px;font-size:12.3px;color:#222;letter-spacing:-0.332px;">Parent Customer</span>
<span class="t" style="left:1470.3px;top:553.00px;font-size:12.3px;color:#222;letter-spacing:-0.230px;">Customer</span>
<span class="t" style="left:1580.9px;top:553.00px;font-size:12.3px;color:#222;letter-spacing:-0.170px;">Qty</span>
<span class="t" style="left:1693.2px;top:553.00px;font-size:12.3px;color:#222;letter-spacing:-0.369px;transform:scaleX(0.9085);">Rate</span>
<span class="t" style="left:1804.25px;top:553.00px;font-size:12.3px;color:#222;letter-spacing:-0.369px;transform:scaleX(0.9935);">Total</span>
<span class="t" style="left:1494.2px;top:646.70px;font-size:12.3px;color:#005E96;letter-spacing:-0.365px;">No Orders</span>
<div style="left:1837px;top:999px;width:75px;height:25px;background:#eeeeee;"></div>
<span class="t" style="left:1852.5px;top:1001.70px;font-size:12.4px;color:#005E96;letter-spacing:-0.372px;transform:scaleX(0.9049);">CANCEL</span>
<div style="left:1258.5px;top:151.5px;width:145.5px;height:55.5px;border:4px solid #f4584c;filter:drop-shadow(1.5px 2px 1.5px rgba(0,0,0,0.75));"></div>
</div>
</body></html>
